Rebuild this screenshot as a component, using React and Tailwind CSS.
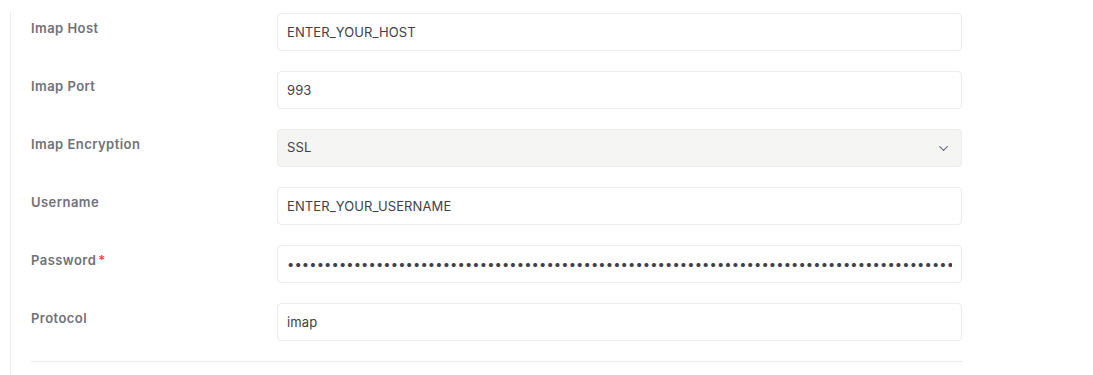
import React from 'react';
import { ChevronDown } from 'lucide-react';

const fields = [
    { label: 'Imap Host', value: 'ENTER_YOUR_HOST' },
    { label: 'Imap Port', value: '993' },
    { label: 'Imap Encryption', value: 'SSL', select: true },
    { label: 'Username', value: 'ENTER_YOUR_USERNAME' },
    { label: 'Password', value: 'x'.repeat(120), password: true, required: true },
    { label: 'Protocol', value: 'imap' },
];

const Field = ({ field }) => (
    <div className="flex items-start">
        <label className="w-[246px] shrink-0 pt-[5px] text-[13px] leading-5 font-semibold tracking-[0.45px] text-[#6f7279] flex items-center">
            {field.label}
            {field.required && <span className="text-[#ef4444] ml-[2px]">*</span>}
        </label>
        {field.select ? (
            <div className="w-[685px] h-[38px] rounded-[4px] border border-[#ececec] bg-[#f5f5f4] flex items-center justify-between pl-[9px] pr-[10px] text-[13px] tracking-[0.1px] text-[#3f4147]">
                <span>{field.value}</span>
                <ChevronDown size={15} strokeWidth={2} className="text-[#6b7280]" />
            </div>
        ) : (
            <input
                readOnly
                type={field.password ? 'password' : 'text'}
                value={field.value}
                className="w-[685px] h-[38px] rounded-[4px] border border-[#ececec] bg-white px-[9px] text-[13px] tracking-[0.1px] text-[#3f4147] outline-none"
            />
        )}
    </div>
);

const App = () => {
    return (
        <div className="min-h-screen bg-white pl-[10px] pt-[12px]" style={{ fontFamily: 'Inter, "Noto Sans", sans-serif' }}>
            <div className="border-l border-[#ececec] pl-[20px] pt-[1px] pb-4 h-[363px]">
                <div className="flex flex-col gap-5 w-[931px]">
                    {fields.map((f) => (
                        <Field key={f.label} field={f} />
                    ))}
                    <div className="h-px bg-[#ececec] w-[932px]" />
                </div>
            </div>
        </div>
    );
};

export default App;
